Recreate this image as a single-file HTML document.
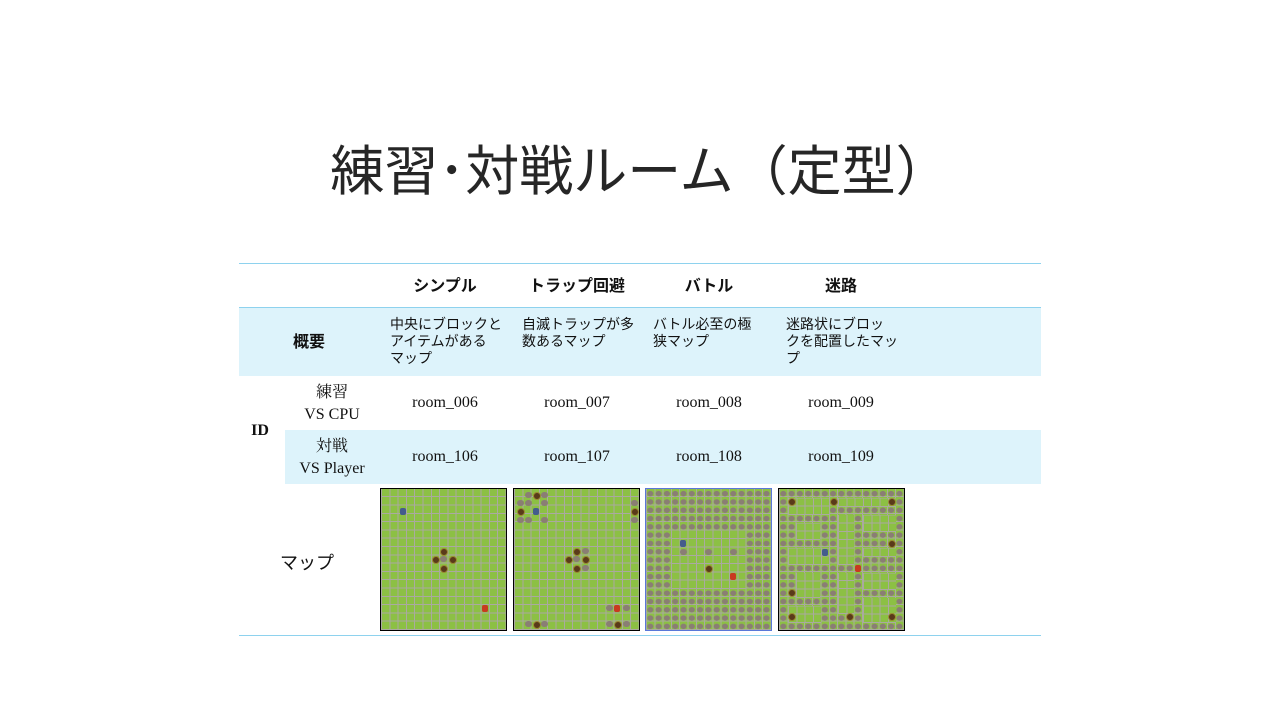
<!DOCTYPE html>
<html><head><meta charset="utf-8"><style>
body{margin:0;width:1280px;height:720px;background:#fff;position:relative;overflow:hidden;font-family:"Liberation Serif","Noto Serif CJK JP",serif;color:#111}
.a{position:absolute}
.t{left:0;width:1280px;top:134px;text-align:center;font:400 54px/76px "Liberation Sans","Noto Sans CJK JP",sans-serif;color:#262626;letter-spacing:0}
.line{position:absolute;left:239px;width:802px;height:1px;background:#8ed2ee}
.blue{position:absolute;background:#ddf3fb}
.c{position:absolute;text-align:center;font-size:16px}
.h{font:700 16px/20px "Liberation Serif","Noto Sans CJK JP",sans-serif}
.d{font:400 14px/17px "Liberation Sans","Noto Sans CJK JP",sans-serif;text-align:left;position:absolute}
.map{position:absolute;top:488px;width:125px;height:141px;border:1px solid #000;
background-color:#8cc044;
background-image:repeating-linear-gradient(90deg,#aaa9a0 0 1px,transparent 1px 8.3px),repeating-linear-gradient(0deg,#aaa9a0 0 1px,transparent 1px 8.3px);}
.g{background:#8cc044;background-image:repeating-linear-gradient(90deg,#aaa9a0 0 1px,transparent 1px 8.3px),repeating-linear-gradient(0deg,#aaa9a0 0 1px,transparent 1px 8.3px)}
.rock{background-image:radial-gradient(ellipse 3.2px 2.8px at 4.3px 4.6px,#8a7e74 0 90%,transparent 100%),repeating-linear-gradient(90deg,#aaa9a0 0 1px,transparent 1px 8.3px),repeating-linear-gradient(0deg,#aaa9a0 0 1px,transparent 1px 8.3px);background-size:8.3px 8.3px,auto,auto}
.dot{position:absolute;width:6px;height:6px;border-radius:50%;background:#5a3a1a;border:1px solid #9a8a30}
.ch{position:absolute;width:6px;height:7px;background:#c83a20;border-radius:2px}
.rr{position:absolute;width:7px;height:6px;background:#8a7e74;border-radius:3px}
</style></head><body>
<div class="a t">練習･対戦ルーム（定型）</div>
<div class="blue" style="left:239px;top:308px;width:802px;height:68px"></div>
<div class="blue" style="left:285px;top:430px;width:756px;height:54px"></div>
<div class="line" style="top:263px"></div>
<div class="line" style="top:307px"></div>
<div class="line" style="top:635px"></div>

<div class="c h" style="left:379px;width:132px;top:277px">シンプル</div>
<div class="c h" style="left:511px;width:132px;top:277px">トラップ回避</div>
<div class="c h" style="left:643px;width:132px;top:277px">バトル</div>
<div class="c h" style="left:775px;width:132px;top:277px">迷路</div>

<div class="c h" style="left:270px;width:78px;top:333px">概要</div>
<div class="d" style="left:390px;top:316px;width:115px">中央にブロックと<br>アイテムがある<br>マップ</div>
<div class="d" style="left:522px;top:316px;width:115px">自滅トラップが多<br>数あるマップ</div>
<div class="d" style="left:653px;top:316px;width:115px">バトル必至の極<br>狭マップ</div>
<div class="d" style="left:786px;top:316px;width:115px">迷路状にブロッ<br>クを配置したマッ<br>プ</div>

<div class="c h" style="left:240px;width:40px;top:421px">ID</div>
<div class="c" style="left:285px;width:94px;top:382px;line-height:22px">練習<br>VS CPU</div>
<div class="c" style="left:285px;width:94px;top:436px;line-height:22px">対戦<br>VS Player</div>
<div class="c" style="left:379px;width:132px;top:394px">room_006</div>
<div class="c" style="left:511px;width:132px;top:394px">room_007</div>
<div class="c" style="left:643px;width:132px;top:394px">room_008</div>
<div class="c" style="left:775px;width:132px;top:394px">room_009</div>
<div class="c" style="left:379px;width:132px;top:448px">room_106</div>
<div class="c" style="left:511px;width:132px;top:448px">room_107</div>
<div class="c" style="left:643px;width:132px;top:448px">room_108</div>
<div class="c" style="left:775px;width:132px;top:448px">room_109</div>

<div class="c" style="left:262px;width:90px;top:549px;font-size:18px;font-family:'Liberation Sans','Noto Sans CJK JP',sans-serif">マップ</div>

<div class="map" style="left:380px">
<div class="ch" style="left:19px;top:19px;background:#445c8c"></div>
<div class="dot" style="left:59px;top:59px"></div><div class="dot" style="left:51px;top:67px"></div><div class="rr" style="left:59px;top:67px"></div><div class="dot" style="left:68px;top:67px"></div><div class="dot" style="left:59px;top:76px"></div>
<div class="ch" style="left:101px;top:116px"></div>
</div>
<div class="map" style="left:513px">
<div class="rr" style="left:11px;top:3px"></div><div class="dot" style="left:19px;top:3px"></div><div class="rr" style="left:27px;top:3px"></div>
<div class="rr" style="left:3px;top:11px"></div><div class="rr" style="left:11px;top:11px"></div><div class="rr" style="left:27px;top:11px"></div>
<div class="dot" style="left:3px;top:19px"></div><div class="ch" style="left:19px;top:19px;background:#445c8c"></div>
<div class="rr" style="left:3px;top:28px"></div><div class="rr" style="left:11px;top:28px"></div><div class="rr" style="left:27px;top:28px"></div>
<div class="rr" style="left:117px;top:11px"></div><div class="dot" style="left:117px;top:19px"></div><div class="rr" style="left:117px;top:28px"></div>
<div class="dot" style="left:59px;top:59px"></div><div class="rr" style="left:68px;top:59px"></div><div class="dot" style="left:51px;top:67px"></div><div class="rr" style="left:59px;top:67px"></div><div class="dot" style="left:68px;top:67px"></div><div class="dot" style="left:59px;top:76px"></div><div class="rr" style="left:68px;top:76px"></div>
<div class="rr" style="left:92px;top:116px"></div><div class="ch" style="left:100px;top:116px"></div><div class="rr" style="left:109px;top:116px"></div>
<div class="rr" style="left:11px;top:132px"></div><div class="dot" style="left:19px;top:132px"></div><div class="rr" style="left:27px;top:132px"></div>
<div class="rr" style="left:92px;top:132px"></div><div class="dot" style="left:100px;top:132px"></div><div class="rr" style="left:109px;top:132px"></div>
</div>
<div class="map rock" style="left:645px;border-color:#5a78d8">
<div class="a g" style="left:25px;top:42px;width:75px;height:58px"></div>
<div class="rr" style="left:34px;top:60px"></div><div class="rr" style="left:59px;top:60px"></div><div class="rr" style="left:84px;top:60px"></div>
<div class="ch" style="left:34px;top:51px;background:#445c8c"></div>
<div class="dot" style="left:59px;top:76px"></div>
<div class="ch" style="left:84px;top:84px"></div>
</div>
<div class="map rock" style="left:778px">
<div class="a g" style="left:9px;top:9px;width:41px;height:17px"></div>
<div class="a g" style="left:59px;top:9px;width:58px;height:9px"></div>
<div class="a g" style="left:17px;top:34px;width:24px;height:17px"></div>
<div class="a g" style="left:59px;top:26px;width:16px;height:50px"></div>
<div class="a g" style="left:84px;top:26px;width:33px;height:17px"></div>
<div class="a g" style="left:9px;top:59px;width:41px;height:17px"></div>
<div class="a g" style="left:84px;top:59px;width:33px;height:9px"></div>
<div class="a g" style="left:17px;top:84px;width:24px;height:25px"></div>
<div class="a g" style="left:59px;top:84px;width:16px;height:41px"></div>
<div class="a g" style="left:84px;top:84px;width:33px;height:17px"></div>
<div class="a g" style="left:9px;top:117px;width:33px;height:17px"></div>
<div class="a g" style="left:84px;top:109px;width:33px;height:25px"></div>
<div class="ch" style="left:43px;top:60px;background:#445c8c"></div>
<div class="ch" style="left:76px;top:76px"></div>
<div class="dot" style="left:9px;top:9px"></div><div class="dot" style="left:51px;top:9px"></div><div class="dot" style="left:109px;top:9px"></div>
<div class="dot" style="left:109px;top:51px"></div><div class="dot" style="left:9px;top:100px"></div>
<div class="dot" style="left:9px;top:124px"></div><div class="dot" style="left:67px;top:124px"></div><div class="dot" style="left:109px;top:124px"></div>
</div>
</body></html>
